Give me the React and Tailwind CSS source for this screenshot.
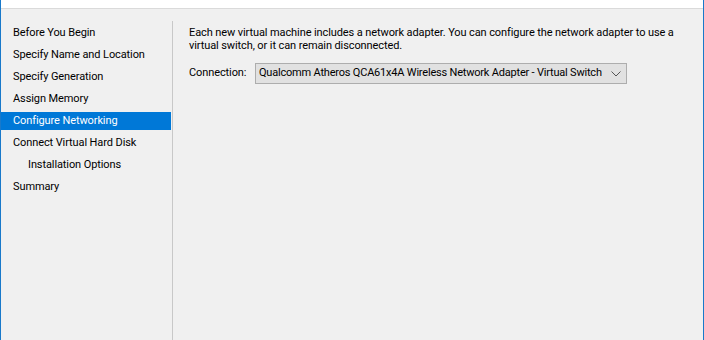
import React from 'react';

const steps = [
  { label: 'Before You Begin' },
  { label: 'Specify Name and Location' },
  { label: 'Specify Generation' },
  { label: 'Assign Memory' },
  { label: 'Configure Networking', active: true },
  { label: 'Connect Virtual Hard Disk' },
  { label: 'Installation Options', indent: true },
  { label: 'Summary' },
];

export default function App() {
  return (
    <div
      className="w-[704px] h-[340px] flex flex-col bg-[#f0f0f0] border-x border-[#1979ca] text-[11px] tracking-[-0.1px] text-black overflow-hidden"
      style={{ fontFamily: 'Roboto, "Liberation Sans", sans-serif' }}
    >
      <div className="h-[9px] bg-white border-b border-[#dadada] shrink-0" />
      <div className="flex flex-1 pt-[12px]">
        <div className="w-[170px] flex flex-col gap-[4px] pt-[3px] shrink-0">
          {steps.map((s) => (
            <div
              key={s.label}
              className={
                'h-[18px] flex items-center ' +
                (s.indent ? 'pl-[27px] ' : 'pl-[12px] ') +
                (s.active ? 'bg-[#0078d7] text-white' : '')
              }
            >
              {s.label}
            </div>
          ))}
        </div>
        <div className="w-px bg-[#c8c8c8] shrink-0 ml-[1px]" />
        <div className="flex-1 pl-[16px] pt-[5px] pr-[10px]">
          <p className="leading-[13px] whitespace-nowrap">
            Each new virtual machine includes a network adapter. You can configure the network adapter to use a
            <br />
            virtual switch, or it can remain disconnected.
          </p>
          <div className="flex items-center mt-[11px]">
            <span className="w-[66px]">Connection:</span>
            <div className="w-[372px] h-[21px] flex items-center justify-between bg-[#e1e1e1] border border-[#adadad] pl-[3px] pr-[5px]">
              <span className="whitespace-nowrap tracking-[-0.2px]">
                Qualcomm Atheros QCA61x4A Wireless Network Adapter - Virtual Switch
              </span>
              <svg className="shrink-0" width="10" height="6" viewBox="0 0 10 6" fill="none" stroke="#555" strokeWidth="1">
                <path d="M0.5 0.5 L5 5 L9.5 0.5" />
              </svg>
            </div>
          </div>
        </div>
      </div>
    </div>
  );
}
